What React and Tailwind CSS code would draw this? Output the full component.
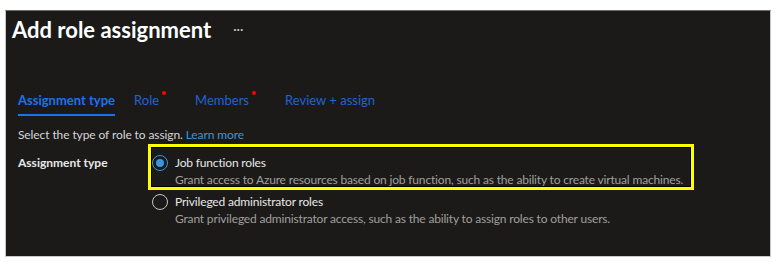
export default function App() {
  const font = { fontFamily: 'Lato, "Open Sans", sans-serif' };
  return (
    <div className="w-[780px] h-[271px] bg-white pt-[10px] pl-[5px]" style={font}>
      <div className="w-[766px] h-[247px] bg-[#1b1a19] border border-[#c8c8c8] border-t-[#6e6e6e] flex flex-col pl-[12px]">
        <div className="flex items-center h-[30px] mt-[4px] -ml-[6px]">
          <span className="text-[22px] font-bold text-white leading-[30px]">Add role assignment</span>
          <span className="ml-[22px] text-[13px] text-[#c8c8c8] -mt-[1px]">···</span>
        </div>
        <div className="flex items-end mt-[46px] text-[13px]">
          <div className="relative flex flex-col">
            <span className="text-[#1a73e8] font-bold leading-[18px]">Assignment type</span>
            <div className="h-[2px] bg-[#1a73e8] mt-[5px]" />
          </div>
          <div className="relative ml-[19px] pb-[7px] text-[#1f64d6] leading-[18px]">
            Role
            <span className="absolute -right-[7px] top-[0px] w-[4px] h-[4px] rounded-full bg-[#ff0000]" />
          </div>
          <div className="relative ml-[36px] pb-[7px] text-[#1f64d6] leading-[18px]">
            Members
            <span className="absolute -right-[7px] top-[0px] w-[4px] h-[4px] rounded-full bg-[#ff0000]" />
          </div>
          <div className="ml-[36px] pb-[7px] text-[#1f64d6] leading-[18px]">Review + assign</div>
        </div>
        <div className="mt-[10px] text-[12px] tracking-[-0.1px] text-[#d6d6d6] leading-[18px]">
          Select the type of role to assign. <span className="text-[#3a96dd]">Learn more</span>
        </div>
        <div className="flex">
          <div className="w-[130px] text-[12px] font-bold text-[#e8e8e8] leading-[18px] pt-[10px]">Assignment type</div>
          <div className="flex flex-col">
            <div className="w-[546px] h-[46px] border-[3px] border-[#ffff00] outline outline-1 outline-[#000] -outline-offset-4 flex items-start pl-[1px] pt-[7px]">
              <div className="w-[16px] h-[16px] rounded-full border border-[#3a96dd] flex items-center justify-center mt-[1px]">
                <div className="w-[8px] h-[8px] rounded-full bg-[#3a96dd]" />
              </div>
              <div className="ml-[7px] flex flex-col text-[12px] tracking-[-0.17px] whitespace-nowrap">
                <span className="text-[#e8e8e8] leading-[17px]">Job function roles</span>
                <span className="text-[#a19f9d] leading-[17px]">Grant access to Azure resources based on job function, such as the ability to create virtual machines.</span>
              </div>
            </div>
            <div className="flex items-start pl-[4px] pt-[3px]">
              <div className="w-[16px] h-[16px] rounded-full border border-[#c8c6c4] mt-[1px]" />
              <div className="ml-[7px] flex flex-col text-[12px] tracking-[-0.17px] whitespace-nowrap">
                <span className="text-[#e8e8e8] leading-[17px]">Privileged administrator roles</span>
                <span className="text-[#a19f9d] leading-[17px]">Grant privileged administrator access, such as the ability to assign roles to other users.</span>
              </div>
            </div>
          </div>
        </div>
      </div>
    </div>
  );
}
